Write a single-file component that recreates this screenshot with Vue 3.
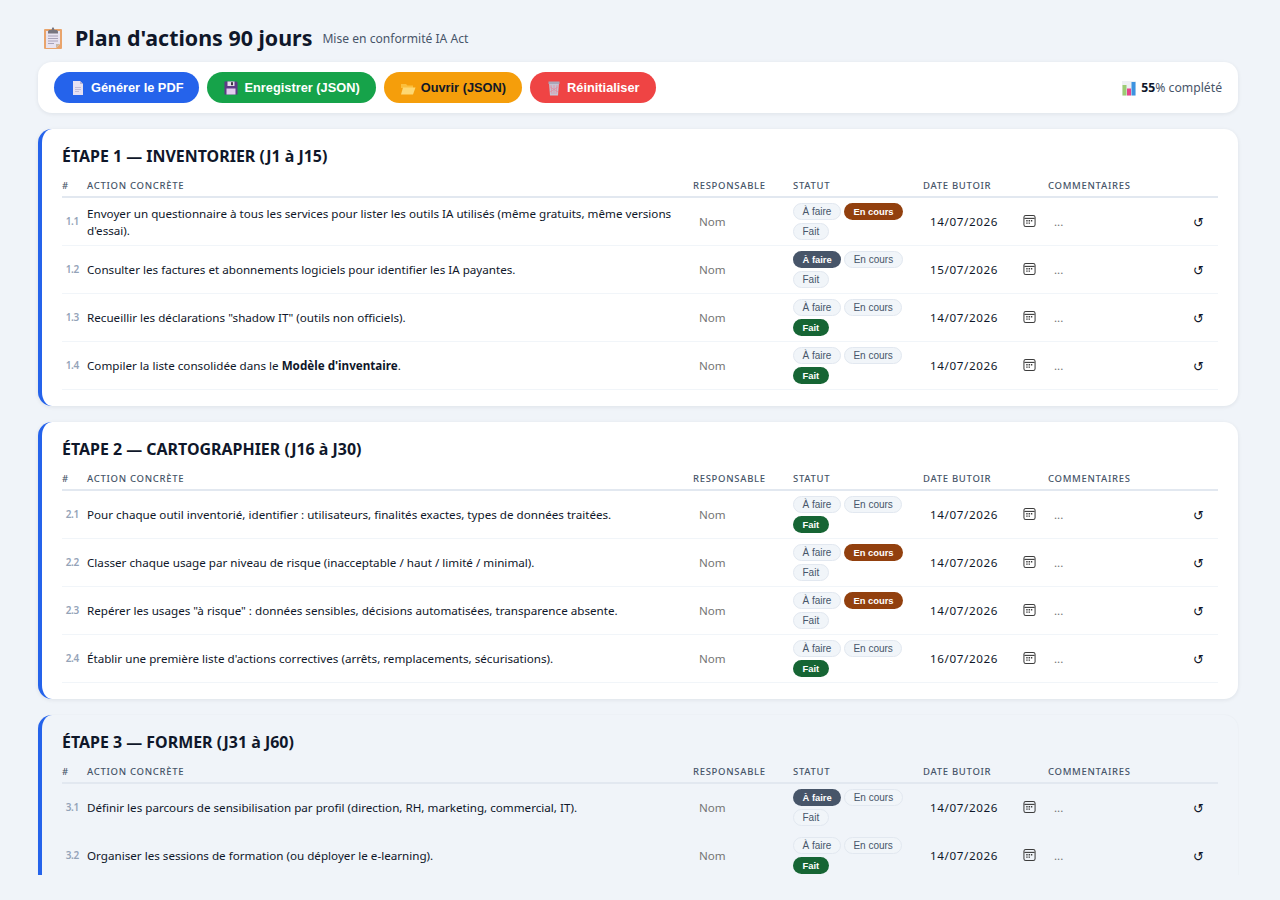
<template>
  <div class="page">
    <div class="container">
      <header class="head">
        <svg class="emoji-title" viewBox="0 0 18 22" aria-hidden="true">
          <rect x="0" y="2" width="18" height="20" rx="1" fill="#e9a46c" />
          <path d="M2 4h14v13l-4 4H2z" fill="#e8e3f0" />
          <path d="M12 21l4-4h-4z" fill="#c8b9a6" />
          <path d="M4 4.500l1-1.500h2.500l.8-2.500h1.400l.8 2.500H13l1 1.500v2H4z" fill="#77757f" />
          <path d="M4 9h10M4 11.500h10M4 14h10M4 16.500h6" stroke="#a8a2b8" stroke-width="1" />
        </svg>
        <h1>Plan d'actions 90 jours</h1>
        <span class="sub">Mise en conformité IA Act</span>
      </header>

      <section class="toolbar">
        <button type="button" class="btn blue">
          <svg class="emoji" viewBox="0 0 16 16"><path d="M3 1h7l3 3v11H3z" fill="#e6e0f2" /><path d="M10 1l3 3h-3z" fill="#bdb6d6" /><path d="M5 7.500h6M5 9.500h6M5 11.500h4" stroke="#c2bcd8" /></svg>
          Générer le PDF
        </button>
        <button type="button" class="btn green">
          <svg class="emoji" viewBox="0 0 16 16"><path d="M1.500 1.500h12l1 1v12h-13z" fill="#5d3b86" /><rect x="4.500" y="1.500" width="7" height="4.500" fill="#e6e1ea" /><rect x="8" y="2.200" width="2" height="3" fill="#3a3344" /><rect x="3.500" y="8.500" width="9" height="6" fill="#e3cdf0" /></svg>
          Enregistrer (JSON)
        </button>
        <button type="button" class="btn amber">
          <svg class="emoji" viewBox="0 0 16 16"><path d="M1 4h5l1.500 1.500H13V8H1z" fill="#fbbf3c" /><path d="M1 14.500l2-7h12.500l-2.500 7z" fill="#fdd873" /></svg>
          Ouvrir (JSON)
        </button>
        <button type="button" class="btn red">
          <svg class="emoji" viewBox="0 0 16 16"><path d="M3 3h10l-1 12.500H4z" fill="#c6c3d2" /><path d="M5 5l1 9M8 5v9M11 5l-1 9M4.200 7l7.800 5M11.800 7L4 12" stroke="#e58a9c" stroke-width=".7" /><rect x="2.500" y="1.500" width="11" height="2.500" fill="#aaa7b8" /></svg>
          Réinitialiser
        </button>
        <div class="progress">
          <svg class="emoji" viewBox="0 0 16 16"><rect x="1" y="1" width="14" height="14.500" fill="#eef0f4" /><rect x="1.500" y="5" width="4" height="10.500" fill="#9ccc74" /><rect x="6" y="8.500" width="4" height="7" fill="#e6438a" /><rect x="10.500" y="2" width="4" height="13.500" fill="#3d93e0" /></svg>
          <span><b>55</b>% complété</span>
        </div>
      </section>

      <section v-for="step in steps" :key="step.title" class="card" :class="{ muted: step.muted }">
        <h2>{{ step.title }}</h2>
        <table>
          <colgroup>
            <col class="c-num" /><col class="c-action" /><col class="c-owner" /><col class="c-status" /><col class="c-date" /><col class="c-note" /><col class="c-reset" />
          </colgroup>
          <thead>
            <tr>
              <th>#</th><th>Action concrète</th><th>Responsable</th><th>Statut</th><th>Date butoir</th><th>Commentaires</th><th></th>
            </tr>
          </thead>
          <tbody>
            <tr v-for="row in step.rows" :key="row.id">
              <td class="num">{{ row.id }}</td>
              <td class="action">{{ row.text }}<b v-if="row.bold">{{ row.bold }}</b>{{ row.after }}</td>
              <td><input class="field" placeholder="Nom" /></td>
              <td>
                <div class="chips">
                  <span v-for="(label, i) in STATUS" :key="label" class="chip" :class="row.status === i ? `on-${i}` : ''">{{ label }}</span>
                </div>
              </td>
              <td>
                <div class="date">
                  <span>{{ row.date }}</span>
                  <svg viewBox="0 0 14 14" aria-hidden="true">
                    <rect x="1" y="1" width="12" height="12" rx="2" fill="none" stroke="#3c3c3c" stroke-width="1.100" />
                    <path d="M1.500 4.200h11" stroke="#3c3c3c" stroke-width="1.200" />
                    <path d="M3.500 6h1.500v1.500H3.500zM6 6h1.500v1.500H6zM8.500 6H10v1.500H8.500zM3.500 8.500h1.500V10H3.500zM6 8.500h1.500V10H6z" fill="#3c3c3c" />
                  </svg>
                </div>
              </td>
              <td><input class="field note" placeholder="..." /></td>
              <td class="reset"><span>↺</span></td>
            </tr>
          </tbody>
        </table>
      </section>
    </div>
  </div>
</template>

<script setup>
const STATUS = ['À faire', 'En cours', 'Fait']

const steps = [
  {
    title: 'ÉTAPE 1 — INVENTORIER (J1 à J15)',
    rows: [
      { id: '1.1', text: "Envoyer un questionnaire à tous les services pour lister les outils IA utilisés (même gratuits, même versions d'essai).", status: 1, date: '14/07/2026' },
      { id: '1.2', text: 'Consulter les factures et abonnements logiciels pour identifier les IA payantes.', status: 0, date: '15/07/2026' },
      { id: '1.3', text: 'Recueillir les déclarations "shadow IT" (outils non officiels).', status: 2, date: '14/07/2026' },
      { id: '1.4', text: 'Compiler la liste consolidée dans le ', bold: "Modèle d'inventaire", after: '.', status: 2, date: '14/07/2026' }
    ]
  },
  {
    title: 'ÉTAPE 2 — CARTOGRAPHIER (J16 à J30)',
    rows: [
      { id: '2.1', text: 'Pour chaque outil inventorié, identifier : utilisateurs, finalités exactes, types de données traitées.', status: 2, date: '14/07/2026' },
      { id: '2.2', text: 'Classer chaque usage par niveau de risque (inacceptable / haut / limité / minimal).', status: 1, date: '14/07/2026' },
      { id: '2.3', text: 'Repérer les usages "à risque" : données sensibles, décisions automatisées, transparence absente.', status: 1, date: '14/07/2026' },
      { id: '2.4', text: "Établir une première liste d'actions correctives (arrêts, remplacements, sécurisations).", status: 2, date: '16/07/2026' }
    ]
  },
  {
    title: 'ÉTAPE 3 — FORMER (J31 à J60)',
    muted: true,
    rows: [
      { id: '3.1', text: 'Définir les parcours de sensibilisation par profil (direction, RH, marketing, commercial, IT).', status: 0, date: '14/07/2026' },
      { id: '3.2', text: 'Organiser les sessions de formation (ou déployer le e-learning).', status: 2, date: '14/07/2026' }
    ]
  }
]
</script>

<style>
html,
body {
  margin: 0;
  background: #f0f4f9;
}
</style>

<style scoped>
.page {
  height: 875px;
  overflow: hidden;
  font-family: "Noto Sans", "Liberation Sans", sans-serif;
  color: #0f172a;
}

.container {
  width: 1200px;
  margin-left: 38px;
  padding-top: 24px;
}

.head {
  display: flex;
  align-items: center;
  height: 28px;
  margin-bottom: 10px;
}

.emoji-title {
  width: 18px;
  height: 22px;
  margin: 0 13px 0 6px;
}

h1 {
  margin: 0 10px 0 0;
  font-size: 21.400px;
  line-height: 28px;
  font-weight: 700;
}

.sub {
  font-size: 12.100px;
  color: #475569;
}

.toolbar {
  display: flex;
  align-items: center;
  gap: 8px;
  height: 51px;
  box-sizing: border-box;
  padding: 0 16px;
  margin-bottom: 16px;
  background: #fff;
  border-radius: 14px;
  box-shadow: 0 1px 4px rgba(15, 23, 42, 0.08);
}

.btn {
  display: flex;
  align-items: center;
  justify-content: center;
  gap: 5px;
  height: 31px;
  padding: 0 16px;
  border: 0;
  border-radius: 999px;
  font: 700 12.800px "Liberation Sans", sans-serif;
  color: #fff;
}

.blue { background: #2563eb; }
.green { background: #16a34a; }
.amber { background: #f59e0b; color: #111827; }
.red { background: #ef4444; }

.emoji {
  flex: none;
  width: 16px;
  height: 16px;
}

.progress {
  display: flex;
  align-items: center;
  gap: 4px;
  margin-left: auto;
  font-size: 12.200px;
  color: #475569;
}

.progress b {
  color: #0f172a;
}

.card {
  padding: 16px 20px;
  margin-bottom: 16px;
  background: #fff;
  border-left: 4px solid #2563eb;
  border-radius: 14px;
  box-shadow: 0 1px 4px rgba(15, 23, 42, 0.08);
}

.card.muted {
  background: #f0f4f9;
  box-shadow: 0 0 2px rgba(15, 23, 42, 0.05);
}

h2 {
  margin: 0 0 12px;
  font-size: 15.950px;
  line-height: 22px;
  font-weight: 700;
}

table {
  width: 100%;
  border-collapse: collapse;
  table-layout: fixed;
}

.c-num { width: 25px; }
.c-owner { width: 100px; }
.c-status { width: 130px; }
.c-date { width: 125px; }
.c-note { width: 135px; }
.c-reset { width: 35px; }

th {
  padding: 0 0 3px;
  border-bottom: 2px solid #e2e8f0;
  font-size: 9.500px;
  line-height: 14px;
  font-weight: 500;
  letter-spacing: 0.7px;
  text-align: left;
  text-transform: uppercase;
  color: #475569;
}

td {
  height: 47px;
  padding: 0;
  border-bottom: 1px solid #f1f5f9;
  vertical-align: middle;
  font-size: 11.650px;
  line-height: 17px;
}

.card.muted td {
  border-bottom-color: #f0f4f9;
}

.num {
  padding-right: 8px;
  font-size: 10px;
  font-weight: 600;
  letter-spacing: -0.3px;
  text-align: right;
  color: #94a3b8;
}

.action {
  padding-right: 16px;
  color: #0f172a;
}

.field {
  width: 100%;
  box-sizing: border-box;
  padding: 0 6px;
  border: 0;
  outline: 0;
  background: transparent;
  font: 11.600px "Noto Sans", sans-serif;
}

.field::placeholder {
  color: #757575;
}

.chips {
  display: flex;
  flex-wrap: wrap;
  gap: 3px;
  width: 115px;
}

.chip {
  box-sizing: border-box;
  height: 17px;
  padding: 0 8.500px;
  border: 1px solid #e2e8f0;
  border-radius: 999px;
  background: #f1f5f9;
  font: 10px/16px "Liberation Sans", sans-serif;
  color: #475569;
}

.on-0,
.on-1,
.on-2 {
  border-color: transparent;
  font-size: 9.400px;
  font-weight: 700;
  color: #fff;
}

.on-0 { background: #475569; }
.on-1 { background: #92400e; }
.on-2 { background: #166534; }

.date {
  display: flex;
  align-items: center;
  justify-content: space-between;
  width: 113px;
  padding-left: 7px;
  box-sizing: border-box;
  letter-spacing: 0.6px;
}

.date svg {
  width: 13px;
  height: 14px;
  margin-top: -1px;
}

.reset {
  font: 13px "DejaVu Sans", sans-serif;
  text-align: center;
  color: #0f172a;
}

.reset span {
  display: block;
  margin: 1px 4px 0 0;
}
</style>
